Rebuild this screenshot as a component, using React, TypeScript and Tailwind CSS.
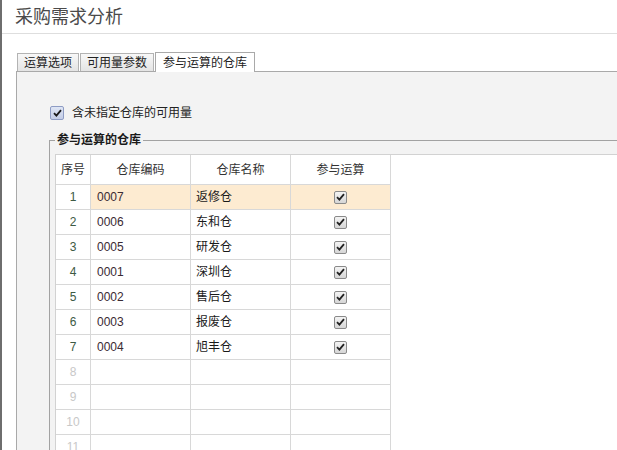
import React from "react";

interface Warehouse {
  code: string;
  name: string;
  active: boolean;
}

const WAREHOUSES: Warehouse[] = [
  { code: "0007", name: "返修仓", active: true },
  { code: "0006", name: "东和仓", active: true },
  { code: "0005", name: "研发仓", active: true },
  { code: "0001", name: "深圳仓", active: true },
  { code: "0002", name: "售后仓", active: true },
  { code: "0003", name: "报废仓", active: true },
  { code: "0004", name: "旭丰仓", active: true },
];

const EMPTY_ROWS = 5;

function SmallCheck() {
  return (
    <span className="w-[13px] h-[13px] border border-[#8a8a8a] rounded-[2px] bg-gradient-to-b from-[#f4f4f4] to-[#d6d6d6] flex items-center justify-center">
      <svg width="9" height="8" viewBox="0 0 9 8">
        <path d="M1 4.2 L3.4 6.6 L8 1.2" fill="none" stroke="#222" strokeWidth="1.8" />
      </svg>
    </span>
  );
}

function Tab({ label, active }: { label: string; active?: boolean }) {
  if (active) {
    return (
      <div className="h-[20px] px-[7px] bg-white border border-b-0 border-[#a9a9a9] flex items-center text-[12px] text-[#222] -mb-px relative z-10">
        {label}
      </div>
    );
  }
  return (
    <div className="h-[18px] px-[6px] bg-gradient-to-b from-[#f8f8f8] to-[#e4e4e4] border border-b-0 border-[#b3b3b3] flex items-center text-[12px] text-[#222]">
      {label}
    </div>
  );
}

export default function App() {
  const rows = [...WAREHOUSES.map((w) => w as Warehouse | null), ...Array(EMPTY_ROWS).fill(null)];

  return (
    <div className="w-[617px] h-[450px] bg-white overflow-hidden flex flex-col border-l-2 border-[#6e6e6e] font-['Liberation_Sans','Noto_Sans_CJK_SC',sans-serif]">
      {/* title */}
      <div className="h-[34px] shrink-0 pl-[13px] border-b border-[#dedede] flex items-center text-[18px] leading-none text-[#4a4a4a]">
        采购需求分析
      </div>

      <div className="flex-1 flex flex-col pl-[14px] pt-[18px] min-h-0">
        {/* tabs */}
        <div className="flex items-end ml-px gap-[1px] leading-none">
          <Tab label="运算选项" />
          <Tab label="可用量参数" />
          <Tab label="参与运算的仓库" active />
        </div>

        {/* panel */}
        <div className="flex-1 bg-[#f3f3f3] border-t border-l border-[#a9a9a9] pl-[32px] pt-[34px] flex flex-col min-h-0">
          <div className="flex items-center h-[14px] ml-px gap-[8px]">
            <span className="w-[14px] h-[14px] border border-[#8e9cc4] rounded-[2px] bg-gradient-to-b from-[#dfe6f5] to-[#c4cde6] flex items-center justify-center">
              <svg width="9" height="8" viewBox="0 0 9 8">
                <path d="M1 4.2 L3.4 6.6 L8 1.2" fill="none" stroke="#1a1a1a" strokeWidth="1.8" />
              </svg>
            </span>
            <span className="text-[12px] text-[#222] leading-none">含未指定仓库的可用量</span>
          </div>

          {/* fieldset */}
          <div className="relative mt-[20px] flex-1 border-t border-l border-[#a2a2a2] flex flex-col min-h-0">
            <span className="absolute -top-[7px] left-[5px] px-[2px] bg-[#f3f3f3] text-[12px] font-bold leading-none text-[#1a1a1a]">
              参与运算的仓库
            </span>

            <div className="mt-[13px] ml-[5px] flex-1 bg-white border-t border-l border-[#d2d2d2]">
              <div className="grid grid-cols-[35px_100px_100px_100px] text-[12px] leading-none">
                {/* header */}
                {["序号", "仓库编码", "仓库名称", "参与运算"].map((h) => (
                  <div
                    key={h}
                    className="h-[30px] border-r border-b border-[#d8d8d8] flex items-center justify-center text-[#333]"
                  >
                    {h}
                  </div>
                ))}

                {rows.map((w, i) => {
                  const hl = i === 0 ? "bg-[#fdebd1]" : "";
                  return (
                    <React.Fragment key={i}>
                      <div
                        className={`h-[25px] border-r border-b border-[#d8d8d8] flex items-center justify-center ${
                          w ? "text-[#3d5a44]" : "text-[#c8c8c8]"
                        }`}
                      >
                        {i + 1}
                      </div>
                      <div className={`h-[25px] border-r border-b border-[#d8d8d8] flex items-center pl-[6px] text-[#3a2a33] ${hl}`}>
                        {w?.code}
                      </div>
                      <div className={`h-[25px] border-r border-b border-[#d8d8d8] flex items-center pl-[5px] text-[#1a1a1a] ${hl}`}>
                        {w?.name}
                      </div>
                      <div className={`h-[25px] border-r border-b border-[#d8d8d8] flex items-center justify-center ${hl}`}>
                        {w?.active && <SmallCheck />}
                      </div>
                    </React.Fragment>
                  );
                })}
              </div>
            </div>
          </div>
        </div>
      </div>
    </div>
  );
}
